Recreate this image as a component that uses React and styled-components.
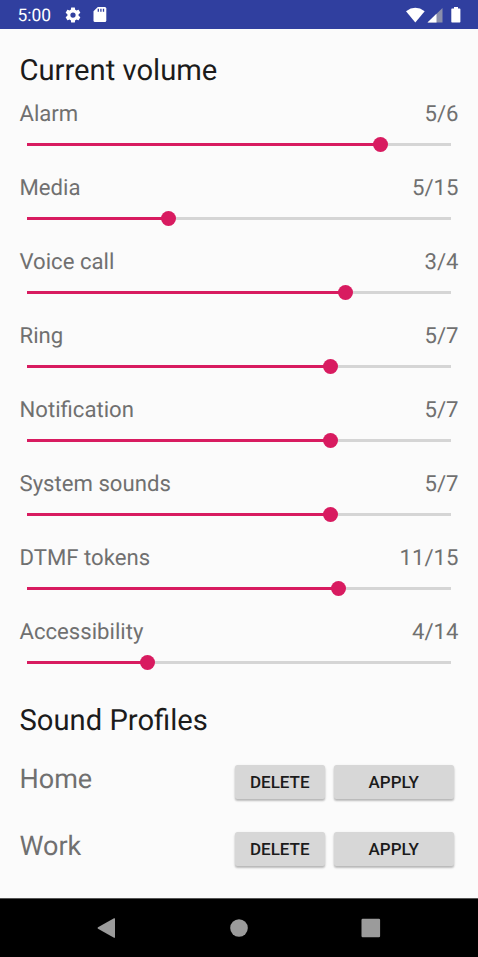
import React from 'react';
import styled, { createGlobalStyle } from 'styled-components';

const GlobalStyle = createGlobalStyle`
  body { margin: 0; background: #fbfbfb; font-family: Roboto, sans-serif; text-rendering: geometricPrecision; }
  * { box-sizing: border-box; }
`;

const Screen = styled.div`
  width: 478px;
  height: 957px;
  display: flex;
  flex-direction: column;
  overflow: hidden;
  background: #fbfbfb;
`;

const StatusBar = styled.header`
  display: flex;
  justify-content: space-between;
  height: 29px;
  padding: 0 15.5px 0 17.5px;
  background: #303f9f;
  color: #fff;
  svg { display: block; }
`;

const StatusGroup = styled.div`
  display: flex;
  align-items: center;
`;

const Clock = styled.span`
  width: 46px;
  font-size: 17.4px;
  line-height: 27px;
  padding-top: 3px;
`;

const Content = styled.main`
  flex: 1;
  display: flex;
  flex-direction: column;
  padding: 0 19.5px;
`;

const Heading = styled.h1`
  margin: 0;
  height: ${(p) => p.$height}px;
  padding-top: ${(p) => p.$top}px;
  font-size: 29.2px;
  font-weight: 400;
  line-height: 36px;
  color: #1b1b1b;
  white-space: nowrap;
`;

const VolumeRow = styled.section`
  height: 74px;
`;

const VolumeLabel = styled.div`
  display: flex;
  justify-content: space-between;
  padding-top: 1px;
  height: 37px;
  font-size: 22.15px;
  line-height: 28px;
  color: #707070;
`;

const Slider = styled.div`
  display: flex;
  align-items: center;
  height: 16px;
  margin: 0 7.1px 0 7px;
`;

const Track = styled.div`
  flex: ${(p) => p.$share} 0 0;
  height: 3px;
  background: ${(p) => (p.$active ? '#d81b60' : '#d5d5d5')};
`;

const Thumb = styled.div`
  width: 15px;
  height: 15px;
  margin: 0 -7.5px;
  border-radius: 50%;
  background: #d81b60;
  z-index: 1;
`;

const ProfileRow = styled.div`
  display: flex;
  height: 67px;
  padding: 15px 5px 0 0;
`;

const ProfileName = styled.span`
  flex: 1;
  font-size: 27px;
  line-height: 29px;
  color: #707070;
`;

const Button = styled.button`
  width: ${(p) => p.$width}px;
  height: 34px;
  margin: 0 0 0 ${(p) => p.$gap || 0}px;
  padding: 1px 0 0;
  border: 0;
  border-radius: 2.5px;
  background: #d7d7d7;
  box-shadow: 0 2px 2px rgba(0, 0, 0, 0.2), 0 1px 3px rgba(0, 0, 0, 0.12);
  font: 500 17px/33px Roboto, sans-serif;
  color: #1b1b1b;
`;

const NavBar = styled.nav`
  display: flex;
  align-items: center;
  justify-content: space-between;
  height: 59px;
  padding: 0 97.5px 0 96px;
  background: #000;
  border-top: 1px solid #555;
  svg { display: block; fill: #9b9b9b; }
`;

const volumes = [
  ['Alarm', 5, 6],
  ['Media', 5, 15],
  ['Voice call', 3, 4],
  ['Ring', 5, 7],
  ['Notification', 5, 7],
  ['System sounds', 5, 7],
  ['DTMF tokens', 11, 15],
  ['Accessibility', 4, 14],
];

function Volume({ name, value, max }) {
  return (
    <VolumeRow>
      <VolumeLabel>
        <span>{name}</span>
        <span>{value}/{max}</span>
      </VolumeLabel>
      <Slider>
        <Track $active $share={value} />
        <Thumb />
        <Track $share={max - value} />
      </Slider>
    </VolumeRow>
  );
}

const GearIcon = () => (
  <svg width="18" height="18" viewBox="0 0 24 24" fill="#fff">
    <path d="M19.43 12.98c.04-.32.07-.64.07-.98s-.03-.66-.07-.98l2.11-1.65c.19-.15.24-.42.12-.64l-2-3.46c-.12-.22-.39-.3-.61-.22l-2.49 1c-.52-.4-1.08-.73-1.69-.98l-.38-2.65C14.46 2.18 14.25 2 14 2h-4c-.25 0-.46.18-.49.42l-.38 2.65c-.61.25-1.17.59-1.69.98l-2.49-1c-.23-.09-.49 0-.61.22l-2 3.46c-.13.22-.07.49.12.64l2.11 1.65c-.04.32-.07.65-.07.98s.03.66.07.98l-2.11 1.65c-.19.15-.24.42-.12.64l2 3.46c.12.22.39.3.61.22l2.49-1c.52.4 1.08.73 1.69.98l.38 2.65c.03.24.24.42.49.42h4c.25 0 .46-.18.49-.42l.38-2.65c.61-.25 1.17-.59 1.69-.98l2.49 1c.23.09.49 0 .61-.22l2-3.46c.12-.22.07-.49-.12-.64l-2.11-1.65zM12 15.5A3.5 3.5 0 1 1 12 8.500a3.500 3.500 0 0 1 0 7z" />
  </svg>
);

const CardIcon = () => (
  <svg width="28" height="17" viewBox="0 0 28 17">
    <path d="M15.800 1H22.800Q24.300 1 24.300 2.500V14.500Q24.300 16 22.800 16H13Q11.500 16 11.500 14.500V5.300Z" fill="#fff" />
    <path d="M16.300 2.800v3M18.900 2.800v3M21.500 2.800v3" stroke="#303f9f" strokeWidth="1.300" />
  </svg>
);

const StatusIcons = () => (
  <svg width="58" height="18" viewBox="0 0 58 18">
    <path d="M1 5.200Q10.300-1.600 19.700 5.200L10.300 16.500Z" fill="#fff" />
    <path d="M37.500 2V16.500H22.500Z" fill="#8b8fab" />
    <path d="M31.500 7.800V16.500H22.500Z" fill="#fff" />
    <path d="M47 2.500h2V1h4v1.500h1.700q.7 0 .7.700v12.600q0 .7-.7.700h-7.700q-.7 0-.7-.7V3.200q0-.7.700-.7Z" fill="#fff" />
  </svg>
);

export default function App() {
  return (
    <>
      <GlobalStyle />
      <Screen>
        <StatusBar>
          <StatusGroup>
            <Clock>5:00</Clock>
            <GearIcon />
            <CardIcon />
          </StatusGroup>
          <StatusGroup>
            <StatusIcons />
          </StatusGroup>
        </StatusBar>
        <Content>
          <Heading $height={70} $top={24}>Current volume</Heading>
          {volumes.map(([name, value, max]) => (
            <Volume key={name} name={name} value={value} max={max} />
          ))}
          <Heading $height={59} $top={12}>Sound Profiles</Heading>
          {['Home', 'Work'].map((name) => (
            <ProfileRow key={name}>
              <ProfileName>{name}</ProfileName>
              <Button $width={89.5}>DELETE</Button>
              <Button $width={119.5} $gap={9.5}>APPLY</Button>
            </ProfileRow>
          ))}
        </Content>
        <NavBar>
          <svg width="20" height="22" viewBox="0 0 20 22">
            <path d="M18 1.300q1-.5 1 .5v18.400q0 1-1 .5L2 11.800q-1-.8 0-1.600Z" />
          </svg>
          <svg width="20" height="18" viewBox="0 0 20 18"><circle cx="11" cy="9" r="8.800" /></svg>
          <svg width="20" height="20" viewBox="0 0 20 20"><rect x=".5" y=".7" width="18.600" height="18.600" rx="1.200" /></svg>
        </NavBar>
      </Screen>
    </>
  );
}
